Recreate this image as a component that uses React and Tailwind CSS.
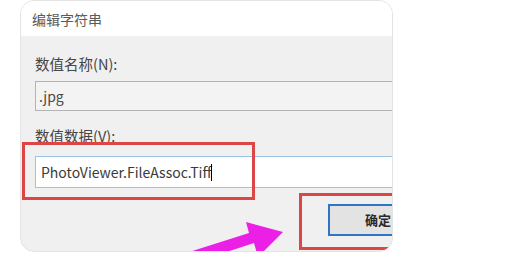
import React from 'react';

const cjk = { fontFamily: '"Noto Sans CJK SC", "Noto Sans", sans-serif' };

export default function App() {
  return (
    <div className="w-[517px] h-[280px] bg-white" style={cjk}>
      <div className="relative ml-[20px] w-[373px] h-[252px] rounded-[14px] overflow-hidden border border-[#e4e4e4] bg-[#f0f0f0]">
        {/* title bar */}
        <div className="h-[35px] bg-white flex items-center pl-[11px] text-[14px] text-[#5a5a5a] leading-none">
          编辑字符串
        </div>

        {/* body */}
        <div className="pl-[14px] flex flex-col">
          <div className="mt-[18px] text-[14.5px] leading-[20px] text-[#454545]">数值名称(N):</div>
          <div className="mt-[7px] w-[420px] h-[30px] border border-[#b4b4b4] bg-[#f3f3f3] flex items-center pl-[3px] text-[14px] text-[#4a4a4a]">
            .jpg
          </div>
          <div className="mt-[15px] text-[14.5px] leading-[20px] text-[#454545]">数值数据(V):</div>
          <div className="mt-[10px] w-[420px] h-[32px] border border-[#9cc4e4] bg-white flex items-center pl-[5px] text-[14px] text-[#3a3a3a]">
            <span>PhotoViewer.FileAssoc.Tiff</span>
            <span className="w-px h-[17px] bg-black"></span>
          </div>
          <div className="mt-[16px] ml-[293px] w-[100px] h-[32px] border-2 border-[#2f75c4] bg-[#e3e3e3] flex items-center justify-center text-[13px] font-bold text-[#2a2a2a]">
            确定
          </div>
        </div>

        {/* annotations */}
        <div className="absolute left-[1px] top-[141px] w-[233px] h-[58px] border-[3px] border-[#dc4644]"></div>
        <div className="absolute left-[278px] top-[192px] w-[120px] h-[57px] border-[3px] border-[#dc4644]"></div>
        <svg className="absolute left-[-21px] top-[-1px]" width="517" height="280" viewBox="0 0 517 280">
          <polygon
            points="186,253 249,233 246,222 283,232 258,257 254,243 196,262"
            fill="#ec1fe6"
          />
        </svg>
      </div>
    </div>
  );
}
